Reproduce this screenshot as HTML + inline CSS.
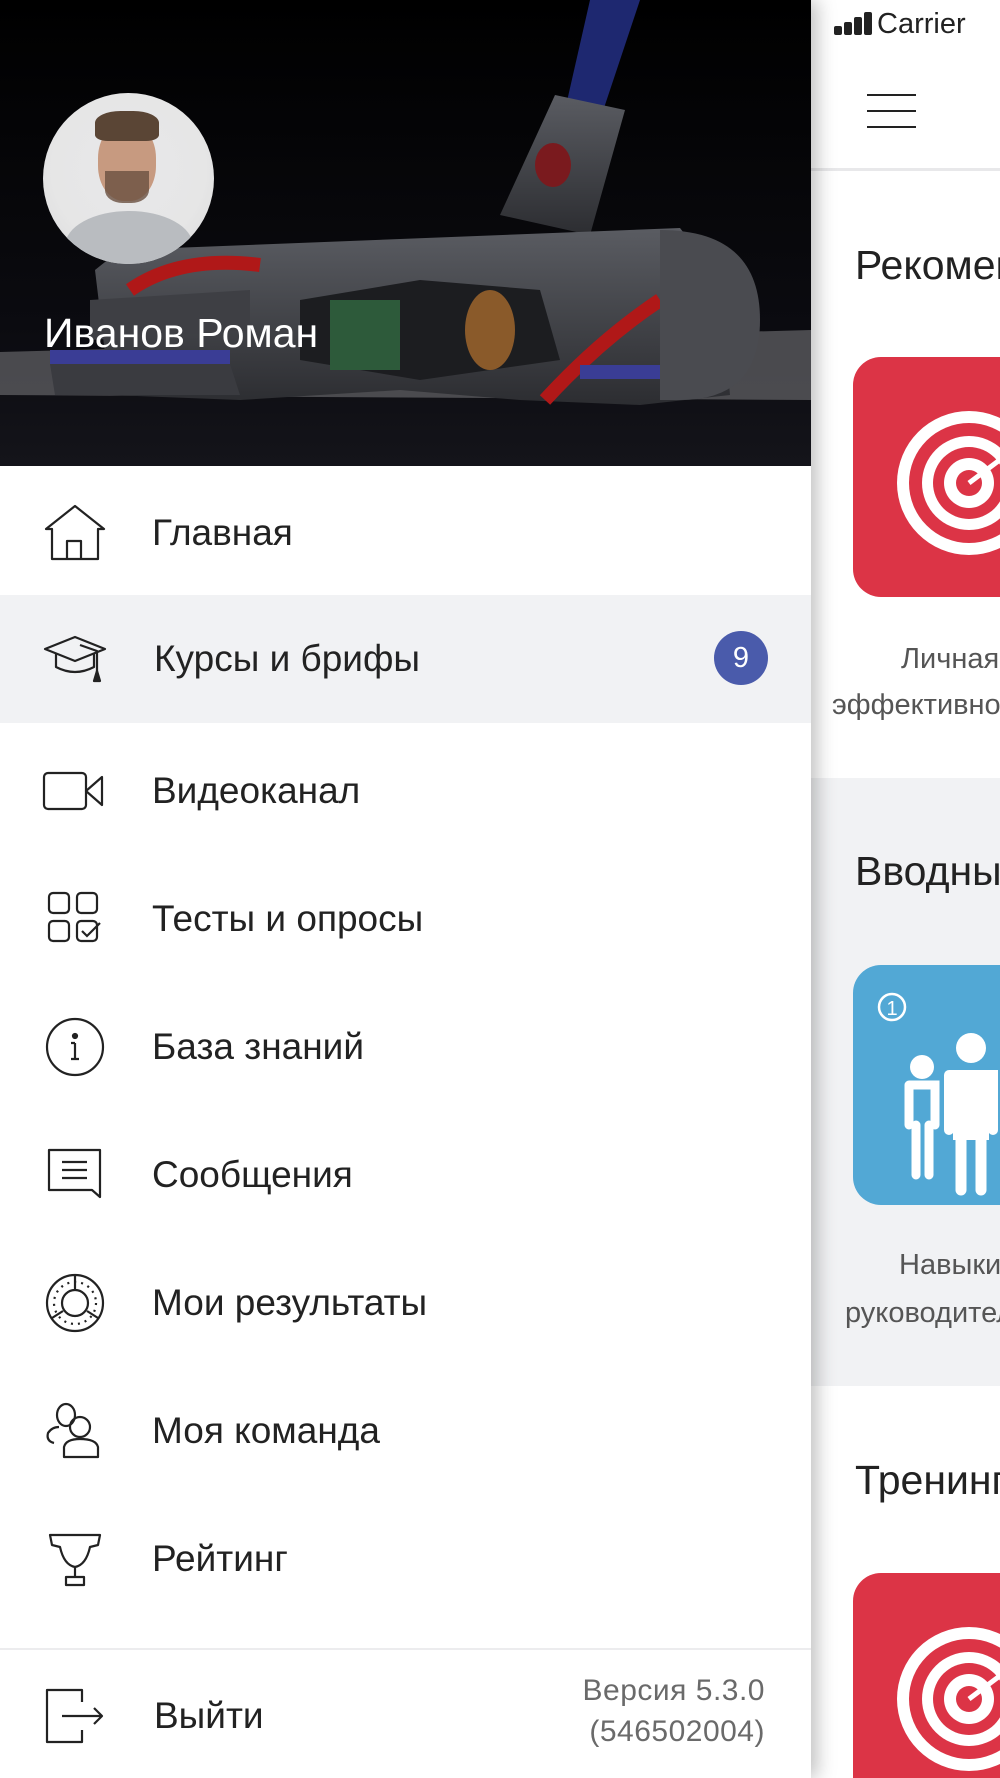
<!DOCTYPE html>
<html><head><meta charset="utf-8">
<style>
*{margin:0;padding:0;box-sizing:border-box}
body{width:1000px;height:1778px;overflow:hidden;position:relative;background:#fff;font-family:"Liberation Sans","DejaVu Sans",sans-serif;color:#222}
.right{position:absolute;left:811px;top:0;width:189px;height:1778px;background:#fff;overflow:hidden}
.abs{position:absolute}
.drawer{position:absolute;left:0;top:0;width:811px;height:1778px;background:#fff;box-shadow:6px 0 18px rgba(0,0,0,.25);z-index:2;overflow:hidden}
.row{position:absolute;left:0;width:811px;height:128px}
.row .t{position:absolute;left:152px;top:50%;transform:translateY(-50%);font-size:37px;color:#222;white-space:nowrap}
.row svg{position:absolute;left:42px;top:50%;transform:translateY(-50%)}
.rt{font-size:41px;color:#222;white-space:nowrap;position:absolute}
.lb{font-size:29px;color:#555;white-space:nowrap;position:absolute}
</style></head><body>

<div class="right">
  <div class="abs" style="left:12px;top:8px;font-size:29px;color:#222;white-space:nowrap">
    <span style="display:inline-block;vertical-align:middle;width:44px;height:26px;position:relative">
      <i style="position:absolute;left:11px;bottom:3px;width:8px;height:9px;background:#222;border-radius:2px"></i>
      <i style="position:absolute;left:21px;bottom:3px;width:8px;height:13px;background:#222;border-radius:2px"></i>
      <i style="position:absolute;left:31px;bottom:3px;width:8px;height:18px;background:#222;border-radius:2px"></i>
      <i style="position:absolute;left:41px;bottom:3px;width:8px;height:23px;background:#222;border-radius:2px"></i>
    </span><span style="margin-left:10px">Carrier</span></div>
  <div class="abs" style="left:56px;top:94px;width:49px;height:2px;background:#222"></div>
  <div class="abs" style="left:56px;top:110px;width:49px;height:2px;background:#222"></div>
  <div class="abs" style="left:56px;top:126px;width:49px;height:2px;background:#222"></div>
  <div class="abs" style="left:0;top:168px;width:189px;height:3px;background:#e8e8ea"></div>
  <div class="rt" style="left:44px;top:242px">Рекомендуемые</div>
  <div class="abs" style="left:42px;top:357px;width:200px;height:240px;background:#dc3446;border-radius:28px;overflow:hidden">
    <svg width="200" height="240" style="position:absolute;left:0;top:0"><g transform="translate(116,126)">
      <circle r="72" fill="#fff"/><circle r="60" fill="#dc3446"/><circle r="47" fill="#fff"/><circle r="36" fill="#dc3446"/><circle r="25" fill="#fff"/><circle r="13" fill="#dc3446"/>
      <path d="M0 0 L40 -30" stroke="#fff" stroke-width="5"/></g></svg>
  </div>
  <div class="lb" style="left:90px;top:643px">Личная</div>
  <div class="lb" style="left:21px;top:689px">эффективность</div>
  <div class="abs" style="left:0;top:778px;width:189px;height:608px;background:#f1f2f4"></div>
  <div class="rt" style="left:44px;top:848px">Вводные</div>
  <div class="abs" style="left:42px;top:965px;width:200px;height:240px;background:#52a8d5;border-radius:28px;overflow:hidden">
    <svg width="200" height="240" style="position:absolute;left:0;top:0">
      <circle cx="39" cy="42" r="13" fill="none" stroke="#fff" stroke-width="2.5"/>
      <text x="39" y="50" font-size="20" fill="#fff" text-anchor="middle" font-family="Liberation Sans">1</text>
      <g fill="#fff" stroke="#fff" stroke-linecap="round">
      <circle cx="69" cy="102" r="12" stroke="none"/>
      <path d="M56 120 L82 120 L82 160 M56 120 L56 160" stroke-width="9" fill="none"/>
      <path d="M63 160 L63 210 M76 160 L76 210" stroke-width="9"/>
      <circle cx="118" cy="83" r="15" stroke="none"/>
      <path d="M96 110 L140 110 L140 165 M96 110 L96 165" stroke-width="10" fill="none"/>
      <rect x="100" y="105" width="36" height="70" stroke="none"/>
      <path d="M108 175 L108 225 M128 175 L128 225" stroke-width="11"/>
      </g>
    </svg>
  </div>
  <div class="lb" style="left:88px;top:1249px">Навыки</div>
  <div class="lb" style="left:34px;top:1297px">руководителя</div>
  <div class="rt" style="left:44px;top:1457px">Тренинги</div>
  <div class="abs" style="left:42px;top:1573px;width:200px;height:240px;background:#dc3446;border-radius:28px;overflow:hidden">
    <svg width="200" height="240" style="position:absolute;left:0;top:0"><g transform="translate(116,126)">
      <circle r="72" fill="#fff"/><circle r="60" fill="#dc3446"/><circle r="47" fill="#fff"/><circle r="36" fill="#dc3446"/><circle r="25" fill="#fff"/><circle r="13" fill="#dc3446"/>
      <path d="M0 0 L40 -30" stroke="#fff" stroke-width="5"/></g></svg>
  </div>
</div>

<div class="drawer">
  <div class="abs" style="left:0;top:0;width:811px;height:466px;background:#000;overflow:hidden">
    <svg width="811" height="466" style="position:absolute;left:0;top:0">
      <defs>
        <linearGradient id="fl" x1="0" y1="0" x2="0" y2="1"><stop offset="0" stop-color="#000"/><stop offset=".7" stop-color="#0b0b10"/><stop offset="1" stop-color="#14141a"/></linearGradient>
        <linearGradient id="body" x1="0" y1="0" x2="0" y2="1"><stop offset="0" stop-color="#5a5c62"/><stop offset="1" stop-color="#2c2d31"/></linearGradient>
      </defs>
      <rect width="811" height="466" fill="url(#fl)"/>
      <path d="M0 352 L811 330 L811 400 L0 395 Z" fill="#5a5a5e" opacity=".8"/>
      <path d="M590 0 L640 0 L600 120 L565 110 Z" fill="#1e2870"/>
      <path d="M555 95 L625 110 L590 235 L500 215 Z" fill="url(#body)"/>
      <ellipse cx="553" cy="165" rx="18" ry="22" fill="#7a1a1e"/>
      <path d="M95 270 L120 250 L680 228 L720 280 L730 395 L640 405 L520 400 L400 390 L240 400 L110 395 Z" fill="url(#body)"/>
      <path d="M300 300 L420 280 L540 290 L560 360 L420 380 L300 360 Z" fill="#1c1d20"/>
      <rect x="330" y="300" width="70" height="70" fill="#2d5a3a"/>
      <ellipse cx="490" cy="330" rx="25" ry="40" fill="#8a5a2a"/>
      <path d="M90 300 L250 290 L250 330 L90 340 Z" fill="#3e3f44"/>
      <path d="M130 290 Q180 255 260 265" stroke="#b01818" stroke-width="14" fill="none"/>
      <path d="M545 400 Q600 340 660 300" stroke="#b01818" stroke-width="14" fill="none"/>
      <rect x="50" y="350" width="180" height="14" fill="#3a3d95"/>
      <rect x="580" y="365" width="110" height="14" fill="#3a3d95"/>
      <path d="M50 364 L230 364 L240 395 L55 395 Z" fill="#3a3b40"/>
      <path d="M660 230 Q760 230 760 320 Q760 400 680 400 L660 400 Z" fill="#4a4b50"/>
    </svg>
    <div class="abs" style="left:43px;top:93px;width:171px;height:171px;border-radius:50%;background:radial-gradient(circle at 50% 45%,#e8e8ea 0,#e6e6e6 60%,#d8d8da 100%);overflow:hidden">
      <div class="abs" style="left:22px;top:118px;width:128px;height:70px;border-radius:50% 50% 0 0;background:#b9bcc0"></div>
      <div class="abs" style="left:55px;top:30px;width:58px;height:78px;border-radius:45%;background:#c79a80"></div>
      <div class="abs" style="left:52px;top:18px;width:64px;height:30px;border-radius:40% 40% 20% 20%;background:#5a4535"></div>
      <div class="abs" style="left:62px;top:78px;width:44px;height:32px;border-radius:0 0 40% 40%;background:#6a5040;opacity:.8"></div>
    </div>
    <div class="abs" style="left:44px;top:310px;font-size:41px;color:#fff;white-space:nowrap">Иванов Роман</div>
  </div>

  <div class="row" style="top:469px">
    <svg width="66" height="60" viewBox="0 0 66 60" fill="none" stroke="#222" stroke-width="2.2" stroke-linejoin="round"><path d="M4 26 L33 3 L62 26 L56 26 L56 56 L10 56 L10 26 Z"/><path d="M25 56 L25 38 L39 38 L39 56"/></svg>
    <div class="t">Главная</div></div>
  <div class="row" style="top:595px;background:#f1f2f4">
    <svg width="66" height="60" viewBox="0 0 66 60" fill="none" stroke="#222" stroke-width="2.2" stroke-linejoin="round"><path d="M3 20 L33 8 L63 20 L33 32 Z"/><path d="M14 25 L14 38 Q33 48 52 38 L52 25"/><path d="M38 16 L55 22 L55 44"/><path d="M52 52 L55 42 L58 52 Z" fill="#222"/></svg>
    <div class="t" style="left:154px">Курсы и брифы</div>
    <div class="abs" style="left:714px;top:36px;width:54px;height:54px;border-radius:50%;background:#4a5bab;color:#fff;font-size:29px;text-align:center;line-height:54px">9</div></div>
  <div class="row" style="top:727px">
    <svg width="66" height="60" viewBox="0 0 66 60" fill="none" stroke="#222" stroke-width="2.2" stroke-linejoin="round"><rect x="2" y="12" width="42" height="36" rx="4"/><path d="M44 30 L60 16 L60 44 Z"/></svg>
    <div class="t">Видеоканал</div></div>
  <div class="row" style="top:855px">
    <svg width="66" height="60" viewBox="0 0 66 60" fill="none" stroke="#222" stroke-width="2.2"><rect x="7" y="4" width="20" height="20" rx="4"/><rect x="35" y="4" width="20" height="20" rx="4"/><rect x="7" y="32" width="20" height="20" rx="4"/><rect x="35" y="32" width="20" height="20" rx="4"/><path d="M40 42 L45 47 L58 34"/></svg>
    <div class="t">Тесты и опросы</div></div>
  <div class="row" style="top:983px">
    <svg width="66" height="60" viewBox="0 0 66 60" fill="none" stroke="#222" stroke-width="2.2"><circle cx="33" cy="30" r="28"/><circle cx="33" cy="19" r="2" fill="#222"/><path d="M33 26 L33 42 M29 42 L37 42 M29 26 L33 26"/></svg>
    <div class="t">База знаний</div></div>
  <div class="row" style="top:1111px">
    <svg width="66" height="60" viewBox="0 0 66 60" fill="none" stroke="#222" stroke-width="2.2" stroke-linejoin="round"><path d="M7 5 L58 5 L58 52 L50 45 L7 45 Z"/><path d="M20 17 L45 17 M20 25 L45 25 M20 33 L45 33"/></svg>
    <div class="t">Сообщения</div></div>
  <div class="row" style="top:1239px">
    <svg width="66" height="60" viewBox="0 0 66 60" fill="none" stroke="#222" stroke-width="2.2"><circle cx="33" cy="30" r="28"/><circle cx="33" cy="30" r="13"/><path d="M33 2 L33 17 M10 45 L21 38 M56 45 L45 38"/><circle cx="33" cy="30" r="21" stroke-dasharray="2 5"/></svg>
    <div class="t">Мои результаты</div></div>
  <div class="row" style="top:1367px">
    <svg width="66" height="60" viewBox="0 0 66 60" fill="none" stroke="#222" stroke-width="2.2" stroke-linejoin="round"><ellipse cx="24" cy="14" rx="9" ry="11"/><path d="M12 42 Q4 40 6 32 Q10 26 17 26"/><circle cx="38" cy="26" r="10"/><path d="M22 56 L22 46 Q24 38 38 38 Q54 38 56 46 L56 56 Z"/></svg>
    <div class="t">Моя команда</div></div>
  <div class="row" style="top:1495px">
    <svg width="66" height="60" viewBox="0 0 66 60" fill="none" stroke="#222" stroke-width="2.2" stroke-linejoin="round"><path d="M8 6 L58 6 L56 16 L48 18 Q44 36 33 38 Q22 36 18 18 L10 16 Z"/><path d="M33 38 L33 48"/><rect x="24" y="48" width="18" height="8"/></svg>
    <div class="t">Рейтинг</div></div>

  <div class="abs" style="left:0;top:1648px;width:811px;height:2px;background:#ececee"></div>
  <div class="row" style="top:1652px">
    <svg width="66" height="60" viewBox="0 0 66 60" fill="none" stroke="#222" stroke-width="2.2" stroke-linejoin="round"><path d="M40 16 L40 4 L5 4 L5 56 L40 56 L40 44"/><path d="M20 30 L60 30 M52 22 L60 30 L52 38"/></svg>
    <div class="t" style="left:154px">Выйти</div>
    <div class="abs" style="right:46px;top:18px;font-size:30px;color:#6a6a6a;text-align:right;line-height:41px;letter-spacing:.5px">Версия 5.3.0<br>(546502004)</div></div>
</div>
</body></html>
